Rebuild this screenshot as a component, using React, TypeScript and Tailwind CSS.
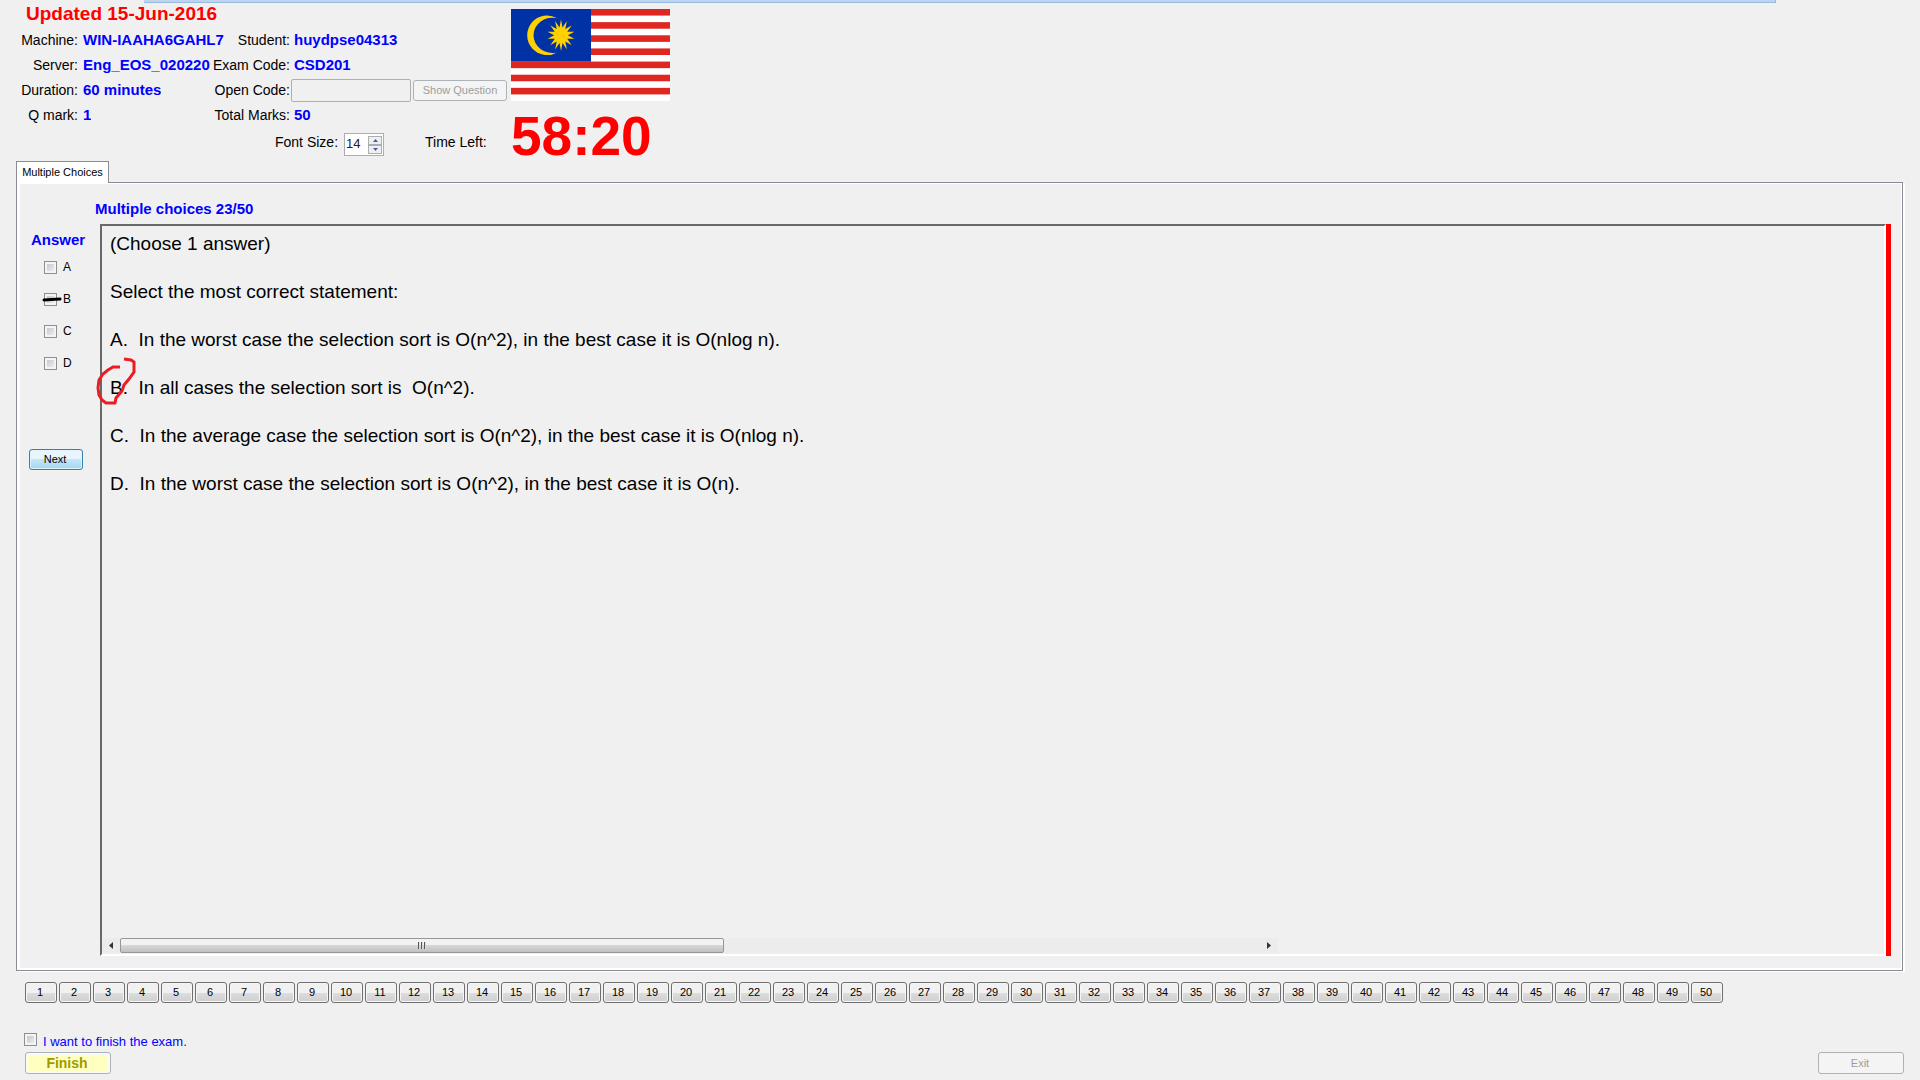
import React from "react";

const questionNumbers = Array.from({ length: 50 }, (_, i) => i + 1);

const lines = [
  "(Choose 1 answer)",
  "Select the most correct statement:",
  "A.  In the worst case the selection sort is O(n^2), in the best case it is O(nlog n).",
  "B.  In all cases the selection sort is  O(n^2).",
  "C.  In the average case the selection sort is O(n^2), in the best case it is O(nlog n).",
  "D.  In the worst case the selection sort is O(n^2), in the best case it is O(n).",
];

const checkboxClass =
  "block size-[13px] shrink-0 appearance-none border border-[#8e8f8f] bg-linear-to-br from-[#b9bfc7] to-[#f6f6f6] shadow-[inset_0_0_0_2px_#f4f4f4] checked:bg-[#3c7fb1]";

function starPoints(cx: number, cy: number, rx: number, ry: number) {
  return Array.from({ length: 28 }, (_, i) => {
    const k = i % 2 === 0 ? 1 : 0.5;
    const a = (i * Math.PI) / 14;
    return `${(cx + Math.sin(a) * rx * k).toFixed(2)},${(cy - Math.cos(a) * ry * k).toFixed(2)}`;
  }).join(" ");
}

function Flag() {
  return (
    <svg width="159" height="92" viewBox="0 0 159 92" role="img" aria-label="Flag of Malaysia" className="block">
      <rect width="159" height="92" fill="#fff" />
      {[0, 1, 2, 3, 4, 5, 6].map((i) => (
        <rect key={i} y={(i * 184) / 14} width="159" height={92 / 14} fill="#de2720" />
      ))}
      <rect width="80" height="52.6" fill="#0032a5" />
      <path d="M46 9.2A19.8 19.8 0 1 0 46 43.4A19 17.6 0 1 1 46 9.2Z" fill="#ffd100" />
      <polygon points={starPoints(50, 26.3, 13.7, 15.8)} fill="#ffd100" />
    </svg>
  );
}

interface InfoRowProps {
  label: string;
  value: string;
  label2: string;
  htmlFor?: string;
  children: React.ReactNode;
}

function InfoRow({ label, value, label2, htmlFor, children }: InfoRowProps) {
  return (
    <div className="flex h-[25px] items-center whitespace-nowrap">
      <span className="w-[78px] shrink-0 text-right">{label}</span>
      <div className="ml-[5px] flex w-[207px] shrink-0 items-center justify-between">
        <span className="min-w-0 overflow-hidden text-[15px] font-bold text-[#0000ff]">{value}</span>
        <label htmlFor={htmlFor} className="shrink-0">{label2}</label>
      </div>
      {children}
    </div>
  );
}

function Header() {
  return (
    <header className="flex text-[14px]">
      <div className="w-[511px] shrink-0">
        <h1 className="pb-[3px] pl-[26px] text-[19px] leading-[22px] font-bold text-[#ff0000]">Updated 15-Jun-2016</h1>
        <InfoRow label="Machine:" value="WIN-IAAHA6GAHL7" label2="Student:">
          <span className="ml-1 text-[15px] font-bold text-[#0000ff]">huydpse04313</span>
        </InfoRow>
        <InfoRow label="Server:" value="Eng_EOS_020220" label2="Exam Code:">
          <span className="ml-1 text-[15px] font-bold text-[#0000ff]">CSD201</span>
        </InfoRow>
        <InfoRow label="Duration:" value="60 minutes" label2="Open Code:" htmlFor="open-code">
          <input id="open-code" type="text" disabled className="ml-px h-[23px] w-[120px] rounded-xs border border-[#afafaf] px-1" />
          <button type="button" disabled className="ml-0.5 h-[21px] w-[94px] rounded-[3px] border border-[#adb2b5] bg-[#f4f4f4] text-[11px] text-[#9d9d9d]">
            Show Question
          </button>
        </InfoRow>
        <InfoRow label="Q mark:" value="1" label2="Total Marks:">
          <span className="ml-1 text-[15px] font-bold text-[#0000ff]">50</span>
        </InfoRow>
        <div className="mt-[5px] flex items-start pl-[275px]">
          <label htmlFor="font-size" className="w-[69px] leading-[18px]">Font Size:</label>
          <div className="flex h-[23px] w-10 items-center justify-between border border-[#abadb3] bg-white px-px">
            <input id="font-size" type="text" defaultValue="14" className="w-5 pb-0.5 text-[13px] text-[#222]" />
            <div className="flex flex-col">
              {["Increase", "Decrease"].map((name, i) => (
                <button key={name} type="button" aria-label={`${name} font size`} className="flex h-[9px] w-3.5 items-center justify-center border border-[#abadb3] bg-[#efefef]">
                  <svg width="5" height="3" viewBox="0 0 5 3">
                    <path d={i === 0 ? "M0 3L2.5 0L5 3Z" : "M0 0L2.5 3L5 0Z"} fill="#4459b0" />
                  </svg>
                </button>
              ))}
            </div>
          </div>
          <span className="ml-[41px] leading-[18px]">Time Left:</span>
        </div>
      </div>
      <div className="pt-1.5">
        <Flag />
        <div className="mt-[11px] text-[55px] leading-[48px] font-bold text-[#ff0000]">58:20</div>
      </div>
    </header>
  );
}

function AnswerColumn() {
  return (
    <aside className="w-[80px] shrink-0 pt-1.5 pl-[11px]">
      <h3 className="text-[15px] leading-5 font-bold text-[#0000ff]">Answer</h3>
      <div className="pt-px pl-[13px]">
        {["A", "B", "C", "D"].map((name) => (
          <label key={name} className="relative flex h-8 items-center gap-1.5 text-[12px]">
            <input type="checkbox" className={checkboxClass} />
            {name}
            {name === "B" && (
              <svg width="21" height="5" viewBox="0 0 21 5" className="absolute top-3.5 -left-0.5">
                <path d="M2 3L9 2.5L18 2" fill="none" stroke="#000" strokeWidth="3" strokeLinecap="round" />
              </svg>
            )}
          </label>
        ))}
      </div>
      <button type="button" className="mt-[70px] -ml-0.5 block h-[21px] w-[54px] rounded-[3px] border border-[#3c7fb1] bg-linear-to-b from-[#e8f5fc] from-50% via-[#c4e5f6] via-50% to-[#a2d7f3] pr-0.5 text-[11px] shadow-[inset_0_0_0_1px_#dff3fd]">
        Next
      </button>
    </aside>
  );
}

function ScrollBar() {
  return (
    <div className="mb-px flex h-[15px] w-[66%] items-center bg-[#ececec]">
      <button type="button" aria-label="Scroll left" className="flex w-[18px] justify-center">
        <svg width="4" height="7" viewBox="0 0 4 7"><path d="M4 0L0 3.5L4 7Z" fill="#333" /></svg>
      </button>
      <div className="flex-1">
        <div className="flex h-[15px] w-[53%] items-center justify-center gap-px rounded-xs border border-[#979797] bg-linear-to-b from-[#f2f2f2] from-45% via-[#dadada] via-45% to-[#bfc0c2]">
          {[0, 1, 2].map((i) => (
            <span key={i} className="h-[7px] w-0.5 border-l border-[#555] bg-[#ddd]" />
          ))}
        </div>
      </div>
      <button type="button" aria-label="Scroll right" className="flex w-[18px] justify-center">
        <svg width="4" height="7" viewBox="0 0 4 7"><path d="M0 0L4 3.5L0 7Z" fill="#333" /></svg>
      </button>
    </div>
  );
}

function QuestionBox() {
  return (
    <section className="flex min-w-0 flex-1 flex-col border-2 border-t-[#696969] border-r-white border-b-white border-l-[#696969]">
      <div className="flex-1 space-y-6 pt-1.5 pl-2 text-[19px] leading-6 whitespace-pre-wrap">
        {lines.map((line) => (
          <p key={line} className="relative">
            {line}
            {line.startsWith("B.") && (
              <svg width="42" height="50" viewBox="0 0 42 50" className="absolute -top-5 -left-[15px]">
                <path
                  d="M25 11H18L13 14L8 18L4 24L3 32L4 39L7 44L11 47H20L21 42L27 35L29 29L34 23L39 16V6L36 4L29 3"
                  fill="none"
                  stroke="#ed1c24"
                  strokeWidth="3"
                />
              </svg>
            )}
          </p>
        ))}
      </div>
      <ScrollBar />
    </section>
  );
}

export default function App() {
  return (
    <div className="flex min-h-screen flex-col bg-[#f0f0f0] font-['Liberation_Sans',Arial,sans-serif] text-black">
      <div className="mx-36 h-[3px] border-r border-b border-[#99bbe0] bg-[#bdd3ee]" />
      <Header />
      <div role="tablist" className="mt-px ml-4 flex">
        <button type="button" role="tab" aria-selected="true" className="relative -mb-px h-[22px] w-[93px] border border-b-0 border-[#898c95] bg-white pb-px text-[11px]">
          Multiple Choices
        </button>
      </div>
      <main className="mr-[17px] ml-4 flex flex-1 flex-col border border-[#898c95] shadow-[2px_1px_0_#fff]">
        <div className="flex flex-1 flex-col border-t border-r border-b-2 border-l-[3px] border-white pr-2.5 pb-3">
          <h2 className="pt-[15px] pb-[5px] pl-[75px] text-[15px] leading-5 font-bold text-[#0000ff]">Multiple choices 23/50</h2>
          <div className="flex flex-1">
            <AnswerColumn />
            <QuestionBox />
            <div className="w-[5px] bg-[#ff0000]" />
          </div>
        </div>
      </main>
      <footer className="pr-4 pb-1.5 pl-[25px]">
        <nav aria-label="Questions" className="flex flex-wrap gap-0.5 pt-[11px]">
          {questionNumbers.map((n) => (
            <button
              key={n}
              type="button"
              className="h-[21px] w-8 rounded-[3px] border border-[#707070] bg-linear-to-b from-[#f1f1f1] from-50% via-[#dddddd] via-50% to-[#cfcfcf] pr-0.5 text-[11px] shadow-[inset_0_0_0_1px_#f6f6f6]"
            >
              {n}
            </button>
          ))}
        </nav>
        <label className="mt-[30px] -ml-px flex h-4 w-fit items-start gap-1.5 text-[13px] leading-[18px] text-[#0000ff]">
          <input type="checkbox" className={checkboxClass} />
          I want to finish the exam.
        </label>
        <div className="mt-[3px] flex justify-between">
          <button type="button" className="h-[22px] w-[86px] rounded-[3px] border border-[#adb2b5] bg-[#ffffc0] pr-0.5 text-[14px] leading-5 font-bold text-[#a09a00] shadow-[inset_0_0_0_2px_#fafafa]">
            Finish
          </button>
          <button type="button" disabled className="h-[22px] w-[86px] rounded-[3px] border border-[#adb2b5] bg-[#f4f4f4] pr-0.5 text-[11px] text-[#9d9d9d]">
            Exit
          </button>
        </div>
      </footer>
    </div>
  );
}
